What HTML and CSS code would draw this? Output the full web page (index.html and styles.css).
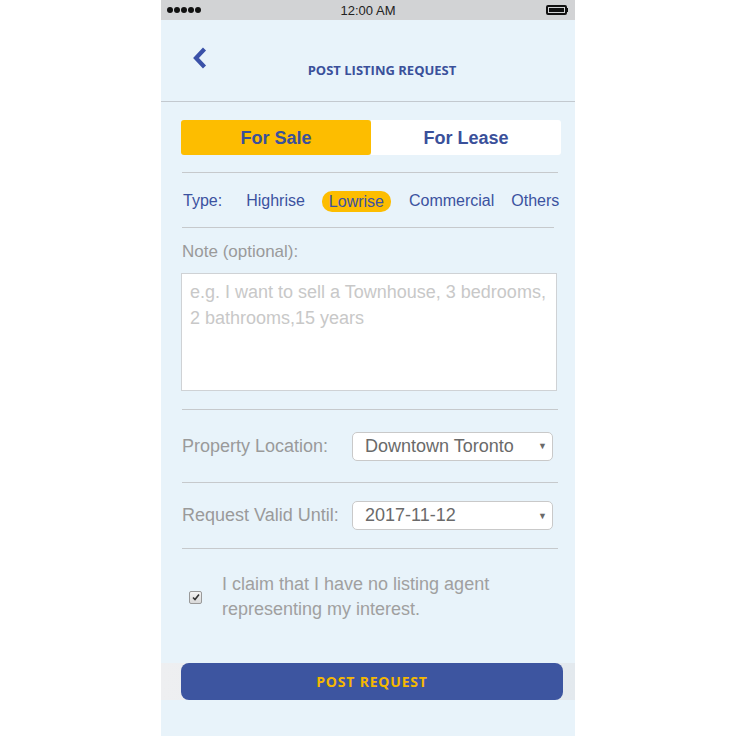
FILE: index.html
```html
<!DOCTYPE html>
<html>
<head>
<meta charset="utf-8">
<link rel="stylesheet" href="styles.css">
</head>
<body>
<div class="phone">
  <div class="status">
    <div class="dots"><i></i><i></i><i></i><i></i><i></i></div>
    <div class="time">12:00 AM</div>
    <div class="battery"><span class="cell"></span><span class="tip"></span></div>
  </div>
  <div class="header">
    <svg class="back" width="18" height="24" viewBox="0 0 18 24"><path d="M13.5 3 L5 12 L13.5 21" fill="none" stroke="#3a51a8" stroke-width="4.2" stroke-linecap="butt" stroke-linejoin="miter"/></svg>
    <div class="title">POST LISTING REQUEST</div>
  </div>
  <div class="content">
    <div class="segment">
      <div class="seg active">For Sale</div>
      <div class="seg">For Lease</div>
    </div>
    <div class="rule"></div>
    <div class="types">
      <span class="type-label">Type:</span>
      <span class="type t1">Highrise</span>
      <span class="type pill">Lowrise</span>
      <span class="type t3">Commercial</span>
      <span class="type">Others</span>
    </div>
    <div class="rule short"></div>
    <div class="note-label">Note (optional):</div>
    <div class="textarea">e.g. I want to sell a Townhouse, 3 bedrooms, 2 bathrooms,15 years</div>
    <div class="rule"></div>
    <div class="field">
      <span class="field-label">Property Location:</span>
      <div class="select"><span>Downtown Toronto</span><span class="caret">▼</span></div>
    </div>
    <div class="rule"></div>
    <div class="field second">
      <span class="field-label">Request Valid Until:</span>
      <div class="select"><span>2017-11-12</span><span class="caret">▼</span></div>
    </div>
    <div class="rule"></div>
    <div class="claim">
      <div class="check"><svg width="8" height="8" viewBox="0 0 8 8"><path d="M1 4.5 L3 6.5 L7 1.5" fill="none" stroke="#333" stroke-width="1.6"/></svg></div>
      <div class="claim-text">I claim that I have no listing agent representing my interest.</div>
    </div>
  </div>
  <div class="footer">
    <div class="post">POST REQUEST</div>
  </div>
</div>
</body>
</html>
```
FILE: styles.css
```css
html, body { margin: 0; padding: 0; background: #ffffff; }
body { display: flex; justify-content: center; font-family: "Liberation Sans", Arial, sans-serif; }
.phone { width: 414px; height: 736px; background: #e8f3fa; display: flex; flex-direction: column; }
.status { height: 20px; background: #d2d3d5; display: flex; align-items: center; justify-content: space-between; padding: 0 6px; box-sizing: border-box; position: relative; }
.dots { display: flex; gap: 1px; }
.dots i { width: 6px; height: 6px; border-radius: 50%; background: #111; display: block; }
.time { position: absolute; left: 0; right: 0; text-align: center; font-size: 13px; color: #222; }
.battery { display: flex; align-items: center; margin-right: 1px; }
.battery .cell { width: 17px; height: 6px; border: 2px solid #111; border-radius: 2px; background: #111; box-shadow: inset 0 0 0 1px #d2d3d5; }
.battery .tip { width: 1.5px; height: 4px; background: #111; }
.header { height: 82px; border-bottom: 1px solid #c3c9cf; position: relative; box-sizing: border-box; display: flex; }
.back { position: absolute; left: 30px; top: 26px; }
.title { margin: 41px auto 0; font-family: "Open Sans", sans-serif; font-weight: 700; font-size: 13px; color: #3a509a; padding-left: 28px; line-height: 18px; }
.content { padding: 18px 14px 0 20px; flex: 1; }
.segment { display: flex; height: 35px; }
.seg { flex: 1; display: flex; align-items: center; justify-content: center; background: #fff; color: #3a509a; font-weight: 700; font-size: 18px; border-radius: 0 3px 3px 0; padding-top: 1px; }
.seg.active { background: #fdbd00; border-radius: 3px; }
.rule { height: 1px; background: #c6c9cc; margin: 0 3px 0 1px; }
.segment + .rule { margin-top: 17px; }
.rule.short { margin-right: 7px; }
.types { height: 54px; box-sizing: border-box; padding: 2px 0 0 2px; display: flex; align-items: center; color: #3b52a0; font-size: 16px; }
.type-label { margin-right: 24px; }
.type { margin-right: 17px; }
.type.pill { margin-right: 18px; }
.type.t3 { margin-right: 17px; }
.type:last-child { margin-right: 0; }
.type.pill { background: #fdbd00; border-radius: 10px; padding: 0 7px; height: 21px; line-height: 21px; }
.note-label { color: #9a9a9a; font-size: 17px; margin: 14px 0 0 1px; line-height: 20px; }
.textarea { margin-top: 11px; margin-right: 4px; height: 118px; box-sizing: border-box; background: #fff; border: 1px solid #cfd2d5; padding: 5px 8px; color: #c8c8c8; font-size: 18px; line-height: 26px; }
.textarea + .rule { margin-top: 18px; }
.field { height: 72px; display: flex; align-items: center; padding-left: 1px; }
.field.second { height: 65px; }
.field-label { color: #9a9a9a; font-size: 18px; width: 170px; }
.select { width: 201px; height: 29px; box-sizing: border-box; background: #fff; border: 1px solid #c9c9c9; border-radius: 5px; display: flex; align-items: center; justify-content: space-between; padding: 0 5px 0 12px; color: #6a6a6a; font-size: 18px; }
.caret { font-size: 9px; color: #6a6a6a; }
.claim { display: flex; align-items: center; padding-top: 23px; }
.check { width: 11px; height: 11px; border: 1px solid #999; border-radius: 2px; background: linear-gradient(#f4f4f4, #d8d8d8); margin: 0 20px 0 8px; display: flex; align-items: center; justify-content: center; }
.claim-text { color: #a0a0a0; font-size: 18px; line-height: 25px; width: 300px; }
.footer { height: 37px; margin-bottom: 36px; background: linear-gradient(90deg, #eeeff1, #e3e9ee); display: flex; padding: 0 12px 0 20px; }
.post { flex: 1; background: #3d55a0; border-radius: 8px; display: flex; align-items: center; justify-content: center; color: #f5b800; font-family: "Open Sans", sans-serif; font-weight: 700; font-size: 14px; letter-spacing: 0.8px; }
```
